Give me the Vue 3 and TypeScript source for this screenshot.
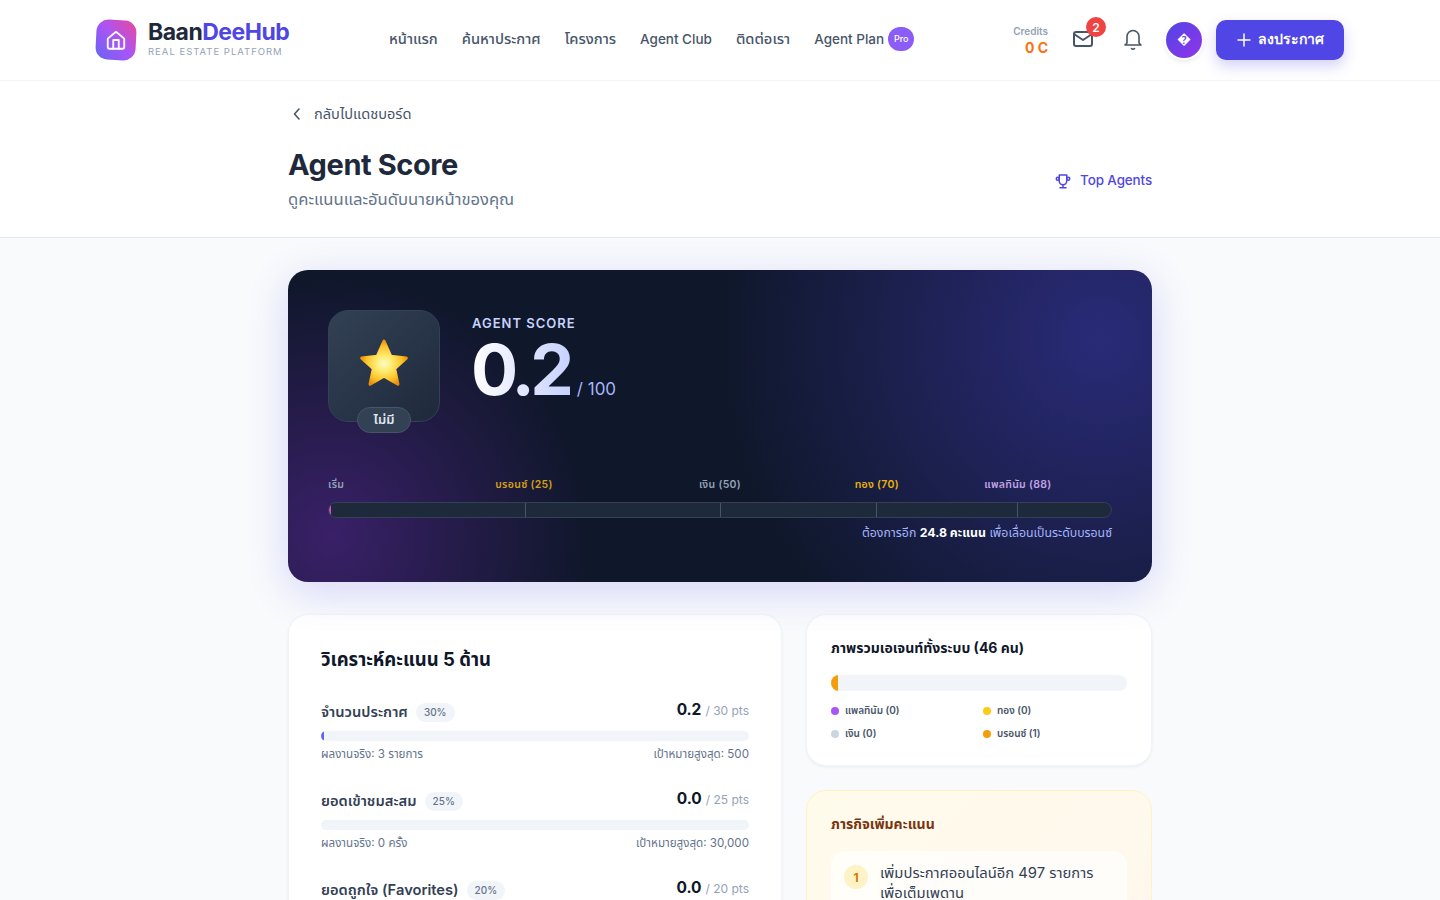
<script setup lang="ts">
interface Metric { name: string; weight: string; score: string; max: string; actual: string; target: string; pct: number }
const nav = [
  { label: 'หน้าแรก', thai: true },
  { label: 'ค้นหาประกาศ', thai: true },
  { label: 'โครงการ', thai: true },
  { label: 'Agent Club', thai: false },
  { label: 'ติดต่อเรา', thai: true },
]
const metrics: Metric[] = [
  { name: 'จำนวนประกาศ', weight: '30%', score: '0.2', max: '/ 30 pts', actual: 'ผลงานจริง: 3 รายการ', target: 'เป้าหมายสูงสุด: 500', pct: 0.6 },
  { name: 'ยอดเข้าชมสะสม', weight: '25%', score: '0.0', max: '/ 25 pts', actual: 'ผลงานจริง: 0 ครั้ง', target: 'เป้าหมายสูงสุด: 30,000', pct: 0 },
  { name: 'ยอดถูกใจ (Favorites)', weight: '20%', score: '0.0', max: '/ 20 pts', actual: 'ผลงานจริง: 0 ครั้ง', target: 'เป้าหมายสูงสุด: 1,000', pct: 0 },
]
const ticks = [25, 50, 70, 88]
const legend = [
  { label: 'แพลทินัม (0)', color: '#a855f7' },
  { label: 'ทอง (0)', color: '#facc15' },
  { label: 'เงิน (0)', color: '#cbd5e1' },
  { label: 'บรอนซ์ (1)', color: '#f59e0b' },
]
</script>

<template>
  <div class="page">
    <header class="topbar">
      <div class="topbar-inner">
        <div class="brand">
          <div class="logo">
            <svg width="22" height="22" viewBox="0 0 24 24" fill="none" stroke="#fff" stroke-width="2" stroke-linecap="round" stroke-linejoin="round"><path d="M3 10.5 12 3l9 7.5V20a1.5 1.5 0 0 1-1.5 1.5h-15A1.5 1.5 0 0 1 3 20z" /><path d="M9 21.5V12h6v9.5" /></svg>
          </div>
          <div class="brand-text">
            <div class="brand-name">Baan<span>DeeHub</span></div>
            <div class="brand-sub">REAL ESTATE PLATFORM</div>
          </div>
        </div>
        <nav class="nav">
          <a v-for="n in nav" :key="n.label" :class="{ thai: n.thai }">{{ n.label }}</a>
          <a class="plan">Agent Plan <span class="pro">Pro</span></a>
        </nav>
        <div class="actions">
          <div class="credits"><small>Credits</small><b>0 C</b></div>
          <div class="icon-btn">
            <svg width="24" height="24" viewBox="0 0 24 24" fill="none" stroke="#475569" stroke-width="2" stroke-linecap="round" stroke-linejoin="round"><rect x="3" y="5" width="18" height="14" rx="2" /><path d="m3 7 9 6 9-6" /></svg>
            <span class="badge">2</span>
          </div>
          <div class="icon-btn bell">
            <svg width="24" height="24" viewBox="0 0 24 24" fill="none" stroke="#475569" stroke-width="1.6" stroke-linecap="round" stroke-linejoin="round"><path d="M18 16V9.5a6 6 0 0 0-12 0V16l-2 2h16z" /><path d="M10.5 21.5a2 2 0 0 0 3 0" /></svg>
          </div>
          <div class="avatar"><span>�</span></div>
          <button class="post-btn">
            <svg width="14" height="14" viewBox="0 0 14 14" fill="none" stroke="#fff" stroke-width="1.5" stroke-linecap="round"><path d="M7 1v12M1 7h12" /></svg>
            <span>ลงประกาศ</span>
          </button>
        </div>
      </div>
    </header>

    <section class="page-head">
      <div class="wrap">
        <a class="back">
          <svg width="16" height="16" viewBox="0 0 16 16" fill="none" stroke="#475569" stroke-width="1.6" stroke-linecap="round" stroke-linejoin="round"><path d="M10 3 5.5 8 10 13" /></svg>
          กลับไปแดชบอร์ด
        </a>
        <div class="head-row">
          <div>
            <h1>Agent Score</h1>
            <p>ดูคะแนนและอันดับนายหน้าของคุณ</p>
          </div>
          <a class="top-link">
            <svg width="18" height="18" viewBox="0 0 24 24" fill="none" stroke="#4f46e5" stroke-width="2" stroke-linecap="round" stroke-linejoin="round"><path d="M8 21h8M12 17v4M7 4h10M17 4v8a5 5 0 0 1-10 0V4" /><circle cx="5" cy="9" r="2" /><circle cx="19" cy="9" r="2" /></svg>
            Top Agents
          </a>
        </div>
      </div>
    </section>

    <main class="wrap main">
      <section class="hero">
        <div class="hero-top">
          <div class="tier-box">
            <svg class="star" width="54" height="52" viewBox="0 0 52 50" aria-label="star">
              <defs>
                <radialGradient id="starFill" cx="50%" cy="52%" r="55%">
                  <stop offset="0%" stop-color="#fffbc2" />
                  <stop offset="38%" stop-color="#ffe866" />
                  <stop offset="75%" stop-color="#fbbf24" />
                  <stop offset="100%" stop-color="#e88a0c" />
                </radialGradient>
              </defs>
              <path d="M26 4 32.5 18.6 47.5 20.2 36.2 30.4 39.4 45.4 26 37.6 12.6 45.4 15.8 30.4 4.5 20.2 19.5 18.6Z" fill="url(#starFill)" stroke="url(#starFill)" stroke-width="3" stroke-linejoin="round" />
            </svg>
            <span class="tier-pill">ไม่มี</span>
          </div>
          <div class="score-block">
            <div class="score-label">AGENT SCORE</div>
            <div class="score-row"><span class="score">0.2</span><span class="score-max">/ 100</span></div>
          </div>
        </div>
        <div class="scale">
          <div class="scale-labels">
            <span class="l-start" style="left:0">เริ่ม</span>
            <span class="l-bronze" style="left:25%">บรอนซ์ (25)</span>
            <span class="l-silver" style="left:50%">เงิน (50)</span>
            <span class="l-gold" style="left:70%">ทอง (70)</span>
            <span class="l-plat" style="left:88%">แพลทินัม (88)</span>
          </div>
          <div class="track">
            <div class="fill"></div>
            <i v-for="t in ticks" :key="t" :style="{ left: t + '%' }"></i>
          </div>
          <p class="need">ต้องการอีก <b>24.8 คะแนน</b> เพื่อเลื่อนเป็นระดับบรอนซ์</p>
        </div>
      </section>

      <div class="grid">
        <section class="card left">
          <h2>วิเคราะห์คะแนน 5 ด้าน</h2>
          <div v-for="m in metrics" :key="m.name" class="metric">
            <div class="m-head">
              <div class="m-name">{{ m.name }} <span class="weight">{{ m.weight }}</span></div>
              <div class="m-score"><b>{{ m.score }}</b> <span>{{ m.max }}</span></div>
            </div>
            <div class="m-bar"><div :style="{ width: m.pct + '%' }"></div></div>
            <div class="m-foot"><span>{{ m.actual }}</span><span>{{ m.target }}</span></div>
          </div>
        </section>

        <aside class="side">
          <section class="card overview">
            <h3>ภาพรวมเอเจนท์ทั้งระบบ (46 คน)</h3>
            <div class="dist"><div></div></div>
            <div class="legend">
              <div v-for="l in legend" :key="l.label"><i :style="{ background: l.color }"></i>{{ l.label }}</div>
            </div>
          </section>
          <section class="mission">
            <h3>ภารกิจเพิ่มคะแนน</h3>
            <div class="task">
              <span class="num">1</span>
              <p>เพิ่มประกาศออนไลน์อีก 497 รายการเพื่อเต็มเพดาน</p>
            </div>
          </section>
        </aside>
      </div>
    </main>
  </div>
</template>

<style>
html, body { margin: 0; background: #f8fafc; overflow: hidden; }
</style>

<style scoped>
* { box-sizing: border-box; }
.page { height: 900px; overflow: hidden; background: #f8fafc; color: #1e293b; font-family: Inter, "Noto Sans", "Noto Sans Thai", sans-serif; }
.topbar { height: 81px; background: #fff; border-bottom: 1px solid #f1f5f9; box-shadow: 0 1px 3px rgba(15,23,42,.03); }
.topbar-inner { width: 1248px; height: 80px; margin: 0 auto; display: flex; align-items: center; }
.brand { display: flex; align-items: center; gap: 12px; width: 293px; }
.logo { width: 40px; height: 40px; border-radius: 12px; transform: rotate(3deg); background: linear-gradient(45deg, #6366f1, #a855f7 50%, #ec4899); display: flex; align-items: center; justify-content: center; }
.logo svg { transform: rotate(-3deg); }
.brand-text { margin-top: -3px; }
.brand-name { font-size: 23px; font-weight: 700; line-height: 26px; letter-spacing: -.5px; color: #1e293b; }
.brand-name span { color: #4f46e5; }
.brand-sub { font-size: 9.5px; line-height: 12px; letter-spacing: 1px; color: #94a3b8; margin-top: 1px; white-space: nowrap; }
.nav { display: flex; align-items: center; gap: 24px; font-size: 13.5px; line-height: 20px; color: #475569; font-weight: 500; margin-top: -2px; }
.nav .thai { font-size: 14.7px; }
.plan { display: flex; align-items: center; gap: 4px; }
.pro { width: 26px; height: 24px; border-radius: 12px; background: #8b5cf6; color: #fff; font-size: 9px; display: flex; align-items: center; justify-content: center; }
.actions { margin-left: auto; display: flex; align-items: center; }
.credits { display: flex; flex-direction: column; align-items: flex-end; width: 48px; margin-right: 22px; }
.credits small { font-size: 10px; line-height: 14px; font-weight: 600; color: #94a3b8; }
.credits b { font-size: 14px; line-height: 18px; color: #f97316; margin-top: 1px; }
.icon-btn { position: relative; width: 26px; height: 24px; margin-right: 24px; margin-top: -2px; display: flex; justify-content: center; }
.icon-btn.bell { margin-right: 20px; }
.badge { position: absolute; top: -10px; right: -10px; width: 20px; height: 20px; border-radius: 50%; background: #ef4444; color: #fff; font-size: 12px; font-weight: 600; display: flex; align-items: center; justify-content: center; }
.avatar { width: 36px; height: 36px; margin-right: 14px; border-radius: 50%; background: linear-gradient(135deg, #4f46e5, #9333ea); color: #fff; display: flex; align-items: center; justify-content: center; font-size: 14px; line-height: 32px; font-weight: 700; box-shadow: 0 0 0 2px #fff, 0 2px 6px rgba(15,23,42,.15); }
.avatar span { margin-top: -3px; }
.post-btn { width: 128px; height: 40px; border: 0; border-radius: 10px; background: #4f46e5; color: #fff; font: 600 14px Inter, "Noto Sans", sans-serif; display: flex; align-items: center; justify-content: center; gap: 7px; box-shadow: 0 6px 14px rgba(79,70,229,.25); }
.post-btn span { margin-top: -2px; }
.page-head { height: 157px; background: #fff; border-bottom: 1px solid #e2e8f0; }
.wrap { width: 864px; margin: 0 auto; }
.back { display: flex; align-items: center; gap: 9px; padding-top: 23px; font-size: 14.6px; line-height: 20px; color: #475569; }
.back svg { margin-left: 1px; }
.head-row { display: flex; justify-content: space-between; align-items: center; margin-top: 23px; }
h1 { margin: 0; font-size: 29px; line-height: 36px; font-weight: 700; color: #1e293b; letter-spacing: -.4px; }
.head-row p { margin: 4px 0 0; font-size: 16.6px; line-height: 24px; color: #64748b; }
.top-link { display: flex; align-items: center; gap: 8px; font-size: 13.4px; letter-spacing: -.1px; font-weight: 500; color: #4f46e5; margin-top: 2px; }
.top-link svg { margin-top: 1px; }
.main { padding-top: 32px; }
.hero { position: relative; height: 312px; padding: 40px; border-radius: 20px; overflow: hidden; background:
  radial-gradient(circle at 94% 22%, rgba(79,70,229,.42), transparent 45%),
  radial-gradient(circle at 5% 85%, rgba(147,51,234,.32), transparent 30%),
  #0f172a; box-shadow: 0 10px 40px rgba(79,70,229,.2); }
.hero-top { display: flex; gap: 32px; }
.tier-box { position: relative; width: 112px; height: 112px; border-radius: 20px; background: linear-gradient(135deg, #334155, #1e293b); border: 1px solid #334155; display: flex; align-items: center; justify-content: center; }
.star { margin-top: -6px; }
.tier-pill { position: absolute; bottom: -12px; left: 28px; width: 54px; height: 26px; border-radius: 13px; background: #334155; border: 1px solid #475569; color: #e2e8f0; font-size: 13px; font-weight: 600; display: flex; align-items: center; justify-content: center; }
.score-label { margin-top: 4px; font-size: 13px; line-height: 18px; font-weight: 600; letter-spacing: 1px; color: #c7d2fe; }
.score-row { display: flex; align-items: flex-end; gap: 3px; }
.score { margin-top: 4px; margin-left: -1px; font-size: 70px; line-height: 68px; font-weight: 700; letter-spacing: -4.6px; background: linear-gradient(90deg, #fff, #c7d2fe); -webkit-background-clip: text; background-clip: text; color: transparent; }
.score-max { font-size: 17px; line-height: 24px; color: #a5b4fc; margin-bottom: 3px; margin-left: 4px; }
.scale { margin-top: 55px; }
.scale-labels { position: relative; height: 16px; margin-bottom: 9px; font-size: 10.5px; line-height: 16px; font-weight: 600; }
.scale-labels span { position: absolute; top: 0; transform: translateX(-50%); white-space: nowrap; letter-spacing: .3px; }
.scale-labels .l-start { transform: none; color: #94a3b8; }
.l-bronze { color: #d4a017; } .l-silver { color: #94a3b8; } .l-gold { color: #eab308; } .l-plat { color: #c4a5e8; }
.track { position: relative; height: 16px; border-radius: 8px; overflow: hidden; background: #1e293b; border: 1px solid #334155; }
.track .fill { width: 2px; height: 100%; background: linear-gradient(90deg, #a855f7, #ec4899); }
.track i { position: absolute; top: 0; bottom: 0; width: 1px; background: #475569; }
.need { margin: 6px 0 0; text-align: right; font-size: 12.3px; line-height: 18px; color: #a5b4fc; }
.need b { color: #fff; }
.grid { display: grid; grid-template-columns: repeat(12, 1fr); gap: 24px; margin-top: 32px; }
.card { background: #fff; border: 1px solid #f1f5f9; border-radius: 20px; box-shadow: 0 1px 3px rgba(15,23,42,.06); }
.left { grid-column: span 7; padding: 32px; }
.side { grid-column: span 5; display: flex; flex-direction: column; gap: 24px; }
h2 { margin: 0 0 30px; font-size: 18.5px; line-height: 24px; font-weight: 700; color: #0f172a; }
.metric { margin-bottom: 28px; }
.m-head { display: flex; justify-content: space-between; align-items: center; height: 22px; }
.m-name { display: flex; align-items: center; gap: 8px; font-size: 14.7px; font-weight: 600; color: #334155; }
.weight { padding: 0 8px; height: 19px; line-height: 19px; border-radius: 10px; background: #f1f5f9; color: #64748b; font-size: 10px; font-weight: 500; }
.m-score { font-size: 12px; color: #94a3b8; margin-top: -6px; }
.m-score b { font-size: 15.5px; color: #0f172a; letter-spacing: -.2px; margin-right: 1px; }
.m-bar { height: 10px; margin-top: 8px; border-radius: 5px; background: #f1f5f9; overflow: hidden; }
.m-bar div { height: 100%; background: #6366f1; }
.m-foot { display: flex; justify-content: space-between; margin-top: 5px; font-size: 11.6px; line-height: 16px; color: #64748b; }
.overview { padding: 23px 24px; height: 152px; }
h3 { margin: 0; font-size: 14px; line-height: 20px; font-weight: 700; color: #0f172a; }
.dist { height: 16px; margin-top: 17px; border-radius: 8px; background: #f1f5f9; overflow: hidden; }
.dist div { width: 7px; height: 100%; background: #f59e0b; }
.legend { display: grid; grid-template-columns: 1fr 1fr; gap: 8px; margin-top: 12px; font-size: 10px; line-height: 15px; font-weight: 600; color: #475569; }
.legend div { display: flex; align-items: center; gap: 6px; }
.legend i { width: 8px; height: 8px; border-radius: 50%; }
.mission { padding: 23px 24px; border-radius: 20px; border: 1px solid #fef3c7; background: linear-gradient(135deg, #fffbeb, #fff7ed); }
.mission h3 { color: #78350f; }
.task { display: flex; gap: 12px; margin-top: 17px; padding: 12px 12px 12px 13px; background: rgba(255,255,255,.7); border-radius: 14px; }
.num { flex: none; width: 24px; height: 24px; border-radius: 50%; background: #fef3c7; color: #d97706; font-size: 12px; font-weight: 700; display: flex; align-items: center; justify-content: center; margin-top: 2px; }
.task p { margin: 0; font-size: 14.8px; line-height: 20px; color: #334155; }
</style>
